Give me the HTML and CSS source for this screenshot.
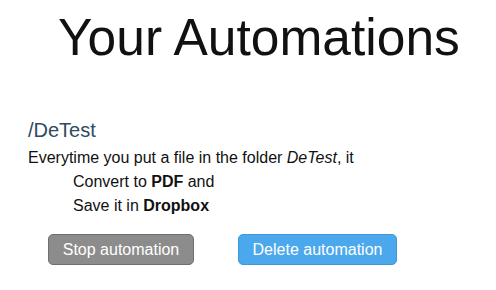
FILE: index.html
```html
<!DOCTYPE html>
<html>
<head>
<meta charset="utf-8">
<link rel="stylesheet" href="styles.css">
</head>
<body>
<h1 class="title">Your Automations</h1>
<section class="automation">
  <h2 class="folder">/DeTest</h2>
  <p class="line">Everytime you put a file in the folder <em>DeTest</em>, it</p>
  <p class="line step">Convert to <b>PDF</b> and</p>
  <p class="line step">Save it in <b>Dropbox</b></p>
  <div class="actions">
    <button class="btn btn-stop">Stop automation</button>
    <button class="btn btn-delete">Delete automation</button>
  </div>
</section>
</body>
</html>
```
FILE: styles.css
```css
html, body {
  margin: 0;
  padding: 0;
  background: #fff;
  font-family: "Liberation Sans", Arial, sans-serif;
  color: #111;
}
.title {
  margin: 0;
  padding: 8px 0 0 58px;
  font-size: 51.5px;
  font-weight: normal;
  line-height: 58px;
}
.automation {
  padding: 52px 0 0 28px;
}
.folder {
  margin: 0;
  font-size: 20px;
  font-weight: normal;
  color: #2e4b62;
  line-height: 24px;
}
.line {
  margin: 0;
  font-size: 16px;
  line-height: 24px;
}
.folder + .line {
  margin-top: 4px;
}
.step {
  padding-left: 45px;
}
.actions {
  display: flex;
  gap: 44px;
  padding: 16px 0 0 20px;
}
.btn {
  font-family: "Liberation Sans", Arial, sans-serif;
  font-size: 16px;
  color: #fff;
  height: 31px;
  border-radius: 5px;
  padding: 0 10px;
  cursor: pointer;
}
.btn-stop {
  background: #8c8c8c;
  border: 1px solid #6f6f6f;
  width: 146px;
}
.btn-delete {
  background: #4ba8ec;
  border: 1px solid #3f98da;
  width: 159px;
}
```
